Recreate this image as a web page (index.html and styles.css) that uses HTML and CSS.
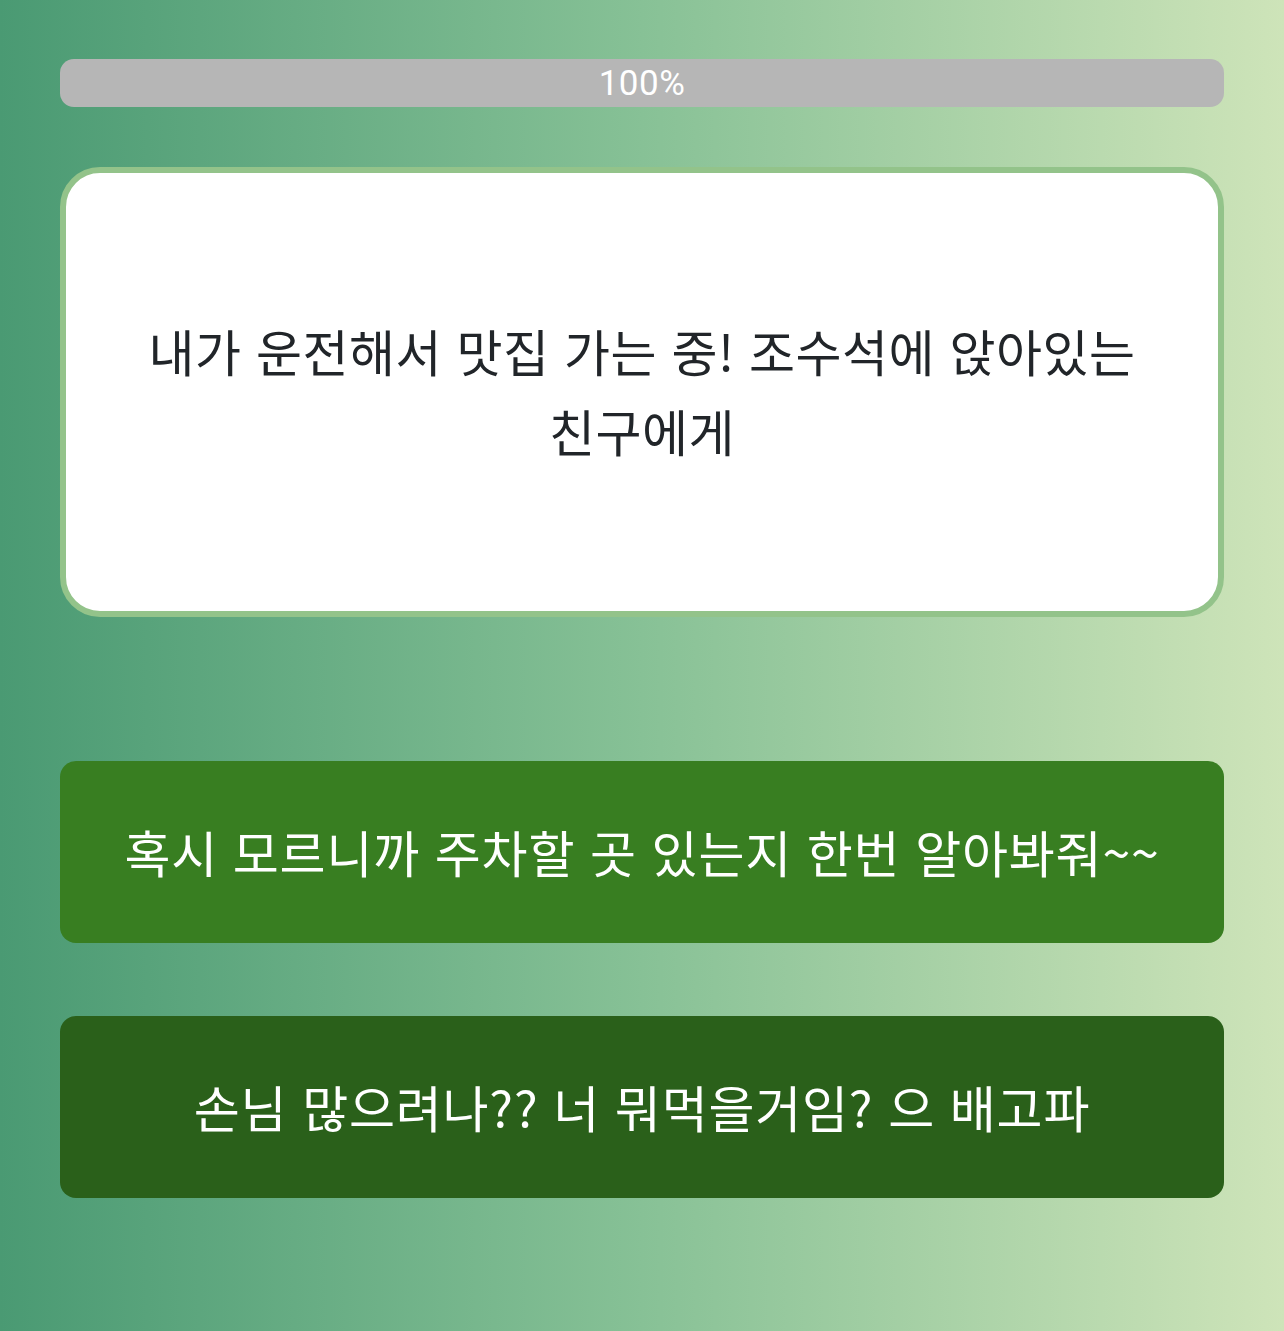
FILE: index.html
```html
<!DOCTYPE html>
<html lang="ko">
<head>
    <meta charset="UTF-8">
    <meta name="viewport" content="width=device-width, initial-scale=1.0">
    <title>Quiz</title>
    <link rel="stylesheet" href="styles.css">
</head>
<body>
    <div class="quiz-container">
        <div class="progress">
            <div class="progress-bar">100%</div>
        </div>
        <div class="question-card">
            <p class="question-text">내가 운전해서 맛집 가는 중! 조수석에 앉아있는 친구에게</p>
        </div>
        <div class="answers">
            <button class="answer answer-a">혹시 모르니까 주차할 곳 있는지 한번 알아봐줘~~</button>
            <button class="answer answer-b">손님 많으려나?? 너 뭐먹을거임? 으 배고파</button>
        </div>
    </div>
</body>
</html>
```

FILE: styles.css
```css
html, body {
    margin: 0;
    padding: 0;
}
body {
    font-family: "Noto Sans CJK KR", "Noto Sans", sans-serif;
    min-height: 1331px;
    background: linear-gradient(to right, #4a9a73 0%, #87c196 50%, #cee4b9 100%);
    color: #212529;
}
.quiz-container {
    padding: 59px 60px 0;
    display: flex;
    flex-direction: column;
}
.progress {
    height: 48px;
    border-radius: 14px;
    background-color: #b6b6b6;
    overflow: hidden;
}
.progress-bar {
    height: 100%;
    display: flex;
    align-items: center;
    justify-content: center;
    color: #fff;
    font-family: "Roboto", "Noto Sans", sans-serif;
    font-size: 35px;
    letter-spacing: 0.5px;
}
.question-card {
    margin-top: 60px;
    height: 450px;
    box-sizing: border-box;
    background-color: #fff;
    border: 6px solid #93c38a;
    border-radius: 40px;
    display: flex;
    align-items: center;
    justify-content: center;
    padding: 0 60px 4px;
}
.question-text {
    margin: 0;
    font-size: 50px;
    line-height: 80px;
    text-align: center;
    letter-spacing: 0.5px;
    word-break: keep-all;
}
.answers {
    margin-top: 144px;
    display: flex;
    flex-direction: column;
    gap: 73px;
}
.answer {
    height: 182px;
    border: none;
    border-radius: 16px;
    color: #fff;
    font-family: inherit;
    font-size: 50px;
    letter-spacing: 0.8px;
    padding-bottom: 4px;
    cursor: pointer;
}
.answer-a {
    background-color: #387e21;
}
.answer-b {
    background-color: #2a601a;
}
```
